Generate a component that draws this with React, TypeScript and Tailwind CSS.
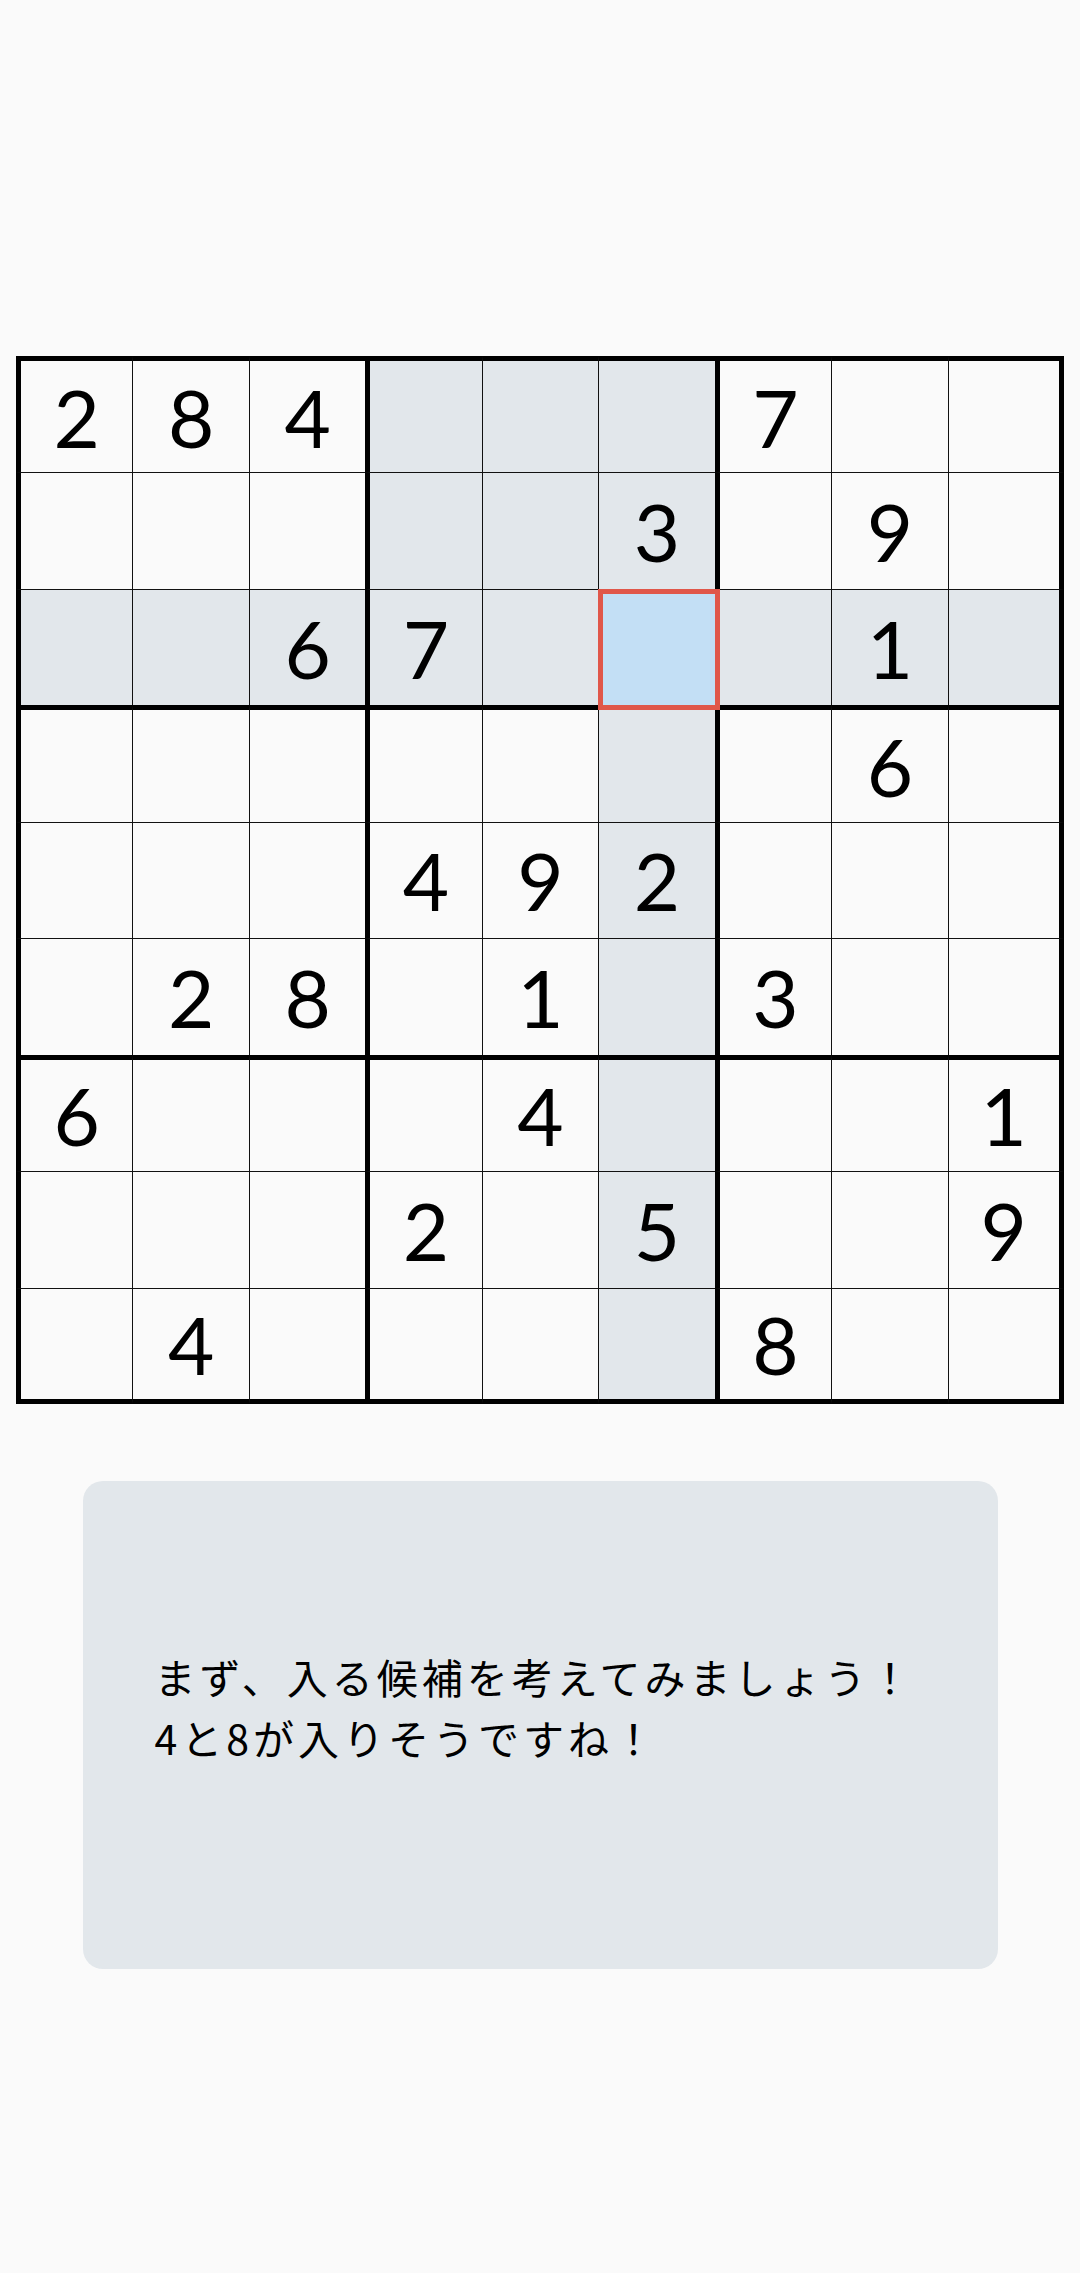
import React from "react";

const puzzle: (number | null)[][] = [
  [2, 8, 4, null, null, null, 7, null, null],
  [null, null, null, null, null, 3, null, 9, null],
  [null, null, 6, 7, null, null, null, 1, null],
  [null, null, null, null, null, null, null, 6, null],
  [null, null, null, 4, 9, 2, null, null, null],
  [null, 2, 8, null, 1, null, 3, null, null],
  [6, null, null, null, 4, null, null, null, 1],
  [null, null, null, 2, null, 5, null, null, 9],
  [null, 4, null, null, null, null, 8, null, null],
];

const selRow = 2;
const selCol = 5;

function Cell({ r, c, value }: { r: number; c: number; value: number | null }) {
  const selected = r === selRow && c === selCol;
  const sameBox =
    Math.floor(r / 3) === Math.floor(selRow / 3) &&
    Math.floor(c / 3) === Math.floor(selCol / 3);
  const highlighted = r === selRow || c === selCol || sameBox;

  // lines sit on the cell boundaries; thick ones grow into the cell
  const left = c % 3 === 0 ? "border-l-[5px] border-l-black" : "border-l border-l-[#111]";
  const top = r % 3 === 0 ? "border-t-[5px] border-t-black" : "border-t border-t-[#111]";
  const right = c === 8 ? "border-r-[5px] border-r-black" : "";
  const bottom = r === 8 ? "border-b-[5px] border-b-black" : "";
  const bg = selected ? "bg-[#c3dff5]" : highlighted ? "bg-[#e2e7eb]" : "bg-[#fafafa]";

  return (
    <div
      className={`relative flex items-center justify-center ${left} ${top} ${right} ${bottom} ${bg}`}
    >
      {selected && (
        <div className="absolute z-10 -top-px -left-px -right-[5px] -bottom-[5px] border-[5px] border-[#e0574a]" />
      )}
      <span className="text-[80px] leading-none text-black font-['Lato','Noto_Sans',sans-serif]">
        {value ?? ""}
      </span>
    </div>
  );
}

export default function App() {
  return (
    <div className="min-h-screen bg-[#fafafa] pt-[356px]">
      <div className="mx-auto grid h-[1048px] w-[1048px] grid-cols-9 grid-rows-9">
        {puzzle.map((row, r) =>
          row.map((v, c) => <Cell key={`${r}-${c}`} r={r} c={c} value={v} />)
        )}
      </div>

      <div className="mx-auto mt-[77px] flex h-[488px] w-[915px] items-center rounded-[20px] bg-[#e2e7eb] pb-[36px] pl-[72px]">
        <p className="text-[41px] leading-[61px] tracking-[4px] text-black font-['Noto_Sans_CJK_JP',sans-serif]">
          まず、入る候補を考えてみましょう！
          <br />
          4と8が入りそうですね！
        </p>
      </div>
    </div>
  );
}
